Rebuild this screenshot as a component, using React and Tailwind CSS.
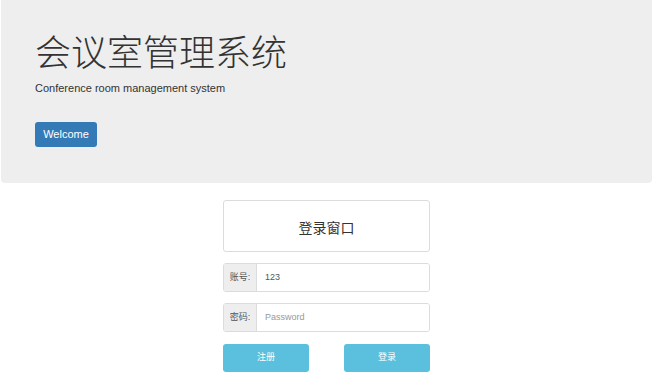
import React from 'react'

const font = { fontFamily: '"Liberation Sans", "Noto Sans CJK SC", sans-serif' }

function InputRow({ label, value, placeholder, type = 'text' }) {
  return (
    <div className="flex h-[29px] w-full rounded-[3px] border border-[#dcdcdc] bg-white overflow-hidden">
      <span className="flex w-[33px] shrink-0 items-center justify-center border-r border-[#dcdcdc] bg-[#eee] text-[9px] text-[#555]">
        {label}
      </span>
      <input
        type={type}
        defaultValue={value}
        placeholder={placeholder}
        readOnly
        className="min-w-0 flex-1 bg-white pl-[8px] text-[9px] text-[#555] outline-none placeholder:text-[#999]"
      />
    </div>
  )
}

export default function App() {
  return (
    <div className="min-h-[392px] w-[660px] bg-white text-[#333]" style={font}>
      <div className="ml-[1px] w-[651px] rounded-b-[4px] bg-[#eee] pl-[34px] pt-[34px] pb-[36px]">
        <h1 className="text-[36px] leading-[40px] font-light">会议室管理系统</h1>
        <p className="mt-[7px] text-[11px] leading-[14px] text-[#333]">Conference room management system</p>
        <button className="mt-[27px] h-[25px] w-[62px] rounded-[3px] bg-[#337ab7] text-[11px] text-white">
          Welcome
        </button>
      </div>

      <div className="ml-[1px] flex w-[651px] flex-col items-center pt-[17px]">
        <div className="flex w-[207px] flex-col gap-[11px]">
          <div className="h-[52px] rounded-[3px] border border-[#dcdcdc] pt-[17px] text-center text-[14px] leading-[20px] text-[#333]">
            登录窗口
          </div>
          <InputRow label="账号:" value="123" />
          <InputRow label="密码:" placeholder="Password" type="password" />
          <div className="mt-[1px] flex justify-between">
            <button className="h-[28px] w-[86px] rounded-[3px] bg-[#5bc0de] text-[9px] text-white">注册</button>
            <button className="h-[28px] w-[86px] rounded-[3px] bg-[#5bc0de] text-[9px] text-white">登录</button>
          </div>
        </div>
      </div>
    </div>
  )
}
